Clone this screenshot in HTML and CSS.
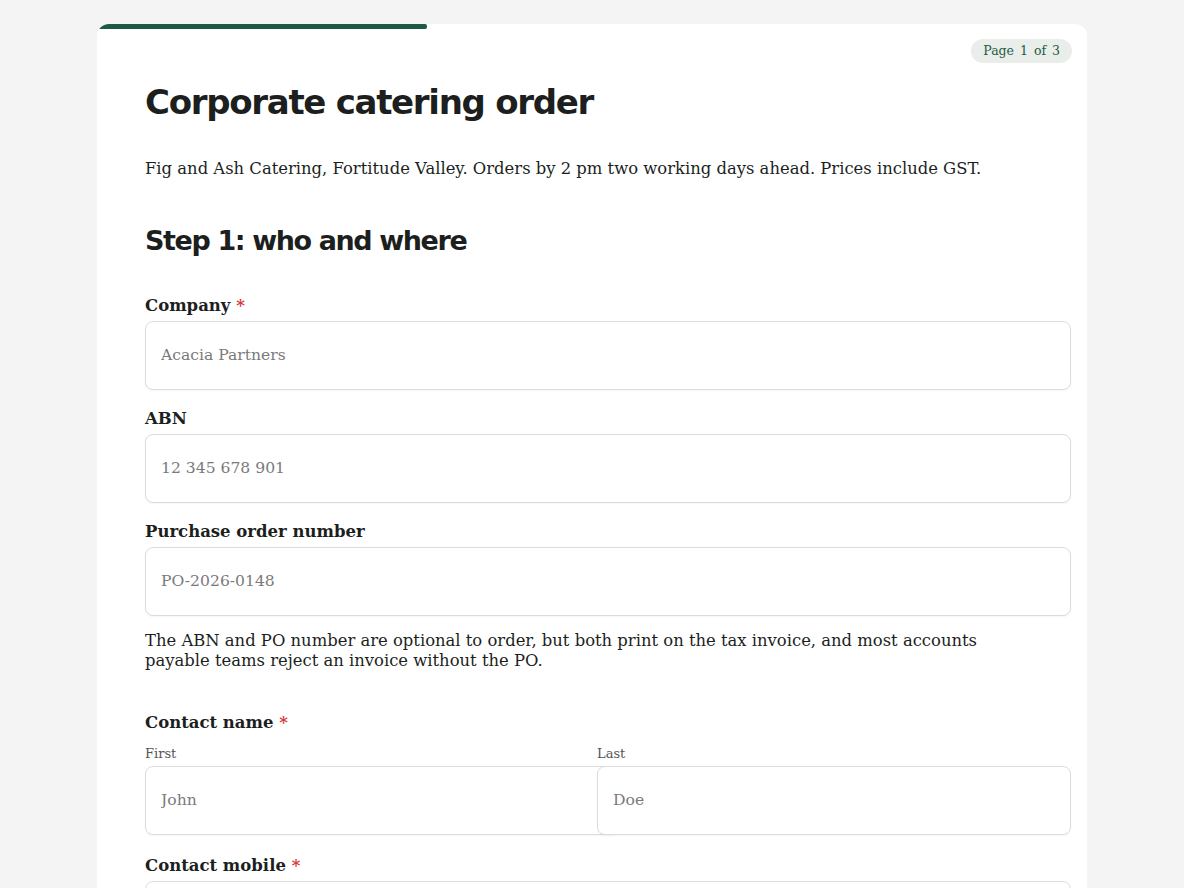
FILE: index.html
```html
<!DOCTYPE html>
<html lang="en">
<head>
<meta charset="utf-8">
<title>Corporate catering order</title>
<link rel="stylesheet" href="styles.css">
</head>
<body>
<main class="card">
  <div class="progress"><div class="progress-fill" style="width:33.333%"></div></div>
  <div class="badge">Page 1 of 3</div>
  <h1 class="title">Corporate catering order</h1>
  <p class="intro">Fig and Ash Catering, Fortitude Valley. Orders by 2 pm two working days ahead. Prices include GST.</p>
  <h2 class="step">Step 1: who and where</h2>

  <div class="field">
    <label class="label" for="company">Company <span class="req">*</span></label>
    <input class="input" id="company" type="text" placeholder="Acacia Partners">
  </div>
  <div class="field">
    <label class="label" for="abn">ABN</label>
    <input class="input" id="abn" type="text" placeholder="12 345 678 901">
  </div>
  <div class="field">
    <label class="label" for="po">Purchase order number</label>
    <input class="input" id="po" type="text" placeholder="PO-2026-0148">
  </div>
  <p class="help">The ABN and PO number are optional to order, but both print on the tax invoice, and most accounts payable teams reject an invoice without the PO.</p>

  <div class="field field-group">
    <div class="label group-label">Contact name <span class="req">*</span></div>
    <div class="name-row">
      <div class="name-col">
        <label class="sublabel" for="first">First</label>
        <input class="input" id="first" type="text" placeholder="John">
      </div>
      <div class="name-col">
        <label class="sublabel" for="last">Last</label>
        <input class="input" id="last" type="text" placeholder="Doe">
      </div>
    </div>
  </div>
  <div class="field">
    <label class="label" for="mobile">Contact mobile <span class="req">*</span></label>
    <input class="input" id="mobile" type="tel" placeholder="0412 345 678">
  </div>
</main>
</body>
</html>
```
FILE: styles.css
```css
* { box-sizing: content-box; }
html, body { margin: 0; padding: 0; }
body {
  background: #f4f4f4;
  font-family: "DejaVu Serif", "Liberation Serif", serif;
  color: #1c1f1e;
}
.card {
  position: relative;
  width: 894px;
  margin: 24px auto 0;
  padding: 56px 48px 48px;
  background: #ffffff;
  border-radius: 12px;
  overflow: hidden;
}
.progress {
  position: absolute;
  top: 0;
  left: 0;
  right: 0;
  height: 5px;
}
.progress-fill {
  height: 100%;
  background: #1e5a43;
  border-radius: 0 2px 2px 0;
}
.badge {
  position: absolute;
  top: 15px;
  right: 15px;
  padding: 3px 12px;
  background: #e9eeeb;
  color: #1e5a43;
  border-radius: 12px;
  font-size: 12.5px;
  line-height: 18px;
  word-spacing: 2px;
}
.title {
  margin: 0;
  font-family: "DejaVu Sans", sans-serif;
  font-weight: 700;
  font-size: 34px;
  line-height: 44px;
  letter-spacing: -1.3px;
}
.intro {
  margin: 33px 0 0;
  font-size: 16.4px;
  line-height: 24px;
}
.step {
  margin: 42px 0 0;
  font-family: "DejaVu Sans", sans-serif;
  font-weight: 700;
  font-size: 27px;
  line-height: 36px;
  letter-spacing: -1.4px;
}
.field { margin-top: 16px; }
.step + .field { margin-top: 34px; }
.label {
  display: block;
  font-size: 16.5px;
  font-weight: 700;
  line-height: 25px;
  margin-bottom: 3px;
}
.req { color: #d93b3b; }
.input {
  display: block;
  width: 100%;
  padding: 20px 15px;
  border: 1px solid #dcdcdc;
  border-radius: 8px;
  font-family: "DejaVu Serif", "Liberation Serif", serif;
  font-size: 15.6px;
  line-height: 27px;
  color: #1c1f1e;
  background: #fff;
  box-shadow: 0 1px 2px rgba(0,0,0,0.04);
}
.input::placeholder { color: #7a7a7a; }
.help {
  margin: 15px 0 0;
  font-size: 16.4px;
  line-height: 20px;
}
.field-group { margin-top: 39px; }
.group-label { margin-bottom: 10px; }
.field-group + .field { margin-top: 18px; }
.name-row {
  display: flex;
  gap: 10px;
}
.name-col { flex: 1; min-width: 0; position: relative; }
.name-col + .name-col { z-index: 1; }
.sublabel {
  display: block;
  font-size: 13px;
  line-height: 18px;
  color: #555;
  margin-bottom: 3px;
}
```
